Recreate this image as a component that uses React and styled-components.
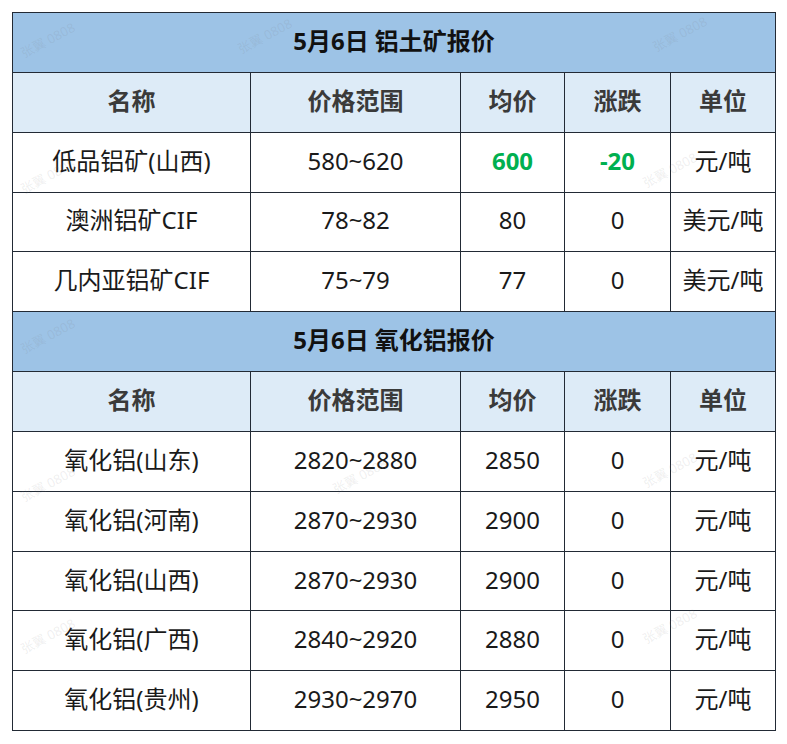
import React from "react";
import styled, { createGlobalStyle } from "styled-components";

const GlobalStyle = createGlobalStyle`
  html, body {
    margin: 0;
    padding: 0;
    background: #ffffff;
  }
  body {
    font-family: "Noto Sans", "Noto Sans CJK SC", sans-serif;
  }
`;

const sections = [
  {
    title: "5月6日 铝土矿报价",
    rows: [
      ["低品铝矿(山西)", "580~620", "600", "-20", "元/吨", true],
      ["澳洲铝矿CIF", "78~82", "80", "0", "美元/吨"],
      ["几内亚铝矿CIF", "75~79", "77", "0", "美元/吨"],
    ],
  },
  {
    title: "5月6日 氧化铝报价",
    rows: [
      ["氧化铝(山东)", "2820~2880", "2850", "0", "元/吨"],
      ["氧化铝(河南)", "2870~2930", "2900", "0", "元/吨"],
      ["氧化铝(山西)", "2870~2930", "2900", "0", "元/吨"],
      ["氧化铝(广西)", "2840~2920", "2880", "0", "元/吨"],
      ["氧化铝(贵州)", "2930~2970", "2950", "0", "元/吨"],
    ],
  },
];

const headers = ["名称", "价格范围", "均价", "涨跌", "单位"];
const colWidths = [238, 210, 104, 106, 105];

const marks = [
  [18, 30], [235, 26], [650, 24],
  [18, 166], [640, 160],
  [18, 326], [330, 466], [640, 460],
  [18, 474], [18, 626], [640, 616],
];

const App = () => {
  return (
    <>
      <GlobalStyle />
      <Page>
        <Table>
          <colgroup>
            {colWidths.map((w, i) => (
              <Col key={i} $w={w} />
            ))}
          </colgroup>
          <tbody>
            {sections.map((s) => (
              <React.Fragment key={s.title}>
                <tr>
                  <TitleCell colSpan={5}>{s.title}</TitleCell>
                </tr>
                <tr>
                  {headers.map((h) => (
                    <HeadCell key={h}>{h}</HeadCell>
                  ))}
                </tr>
                {s.rows.map((r) => (
                  <tr key={r[0]}>
                    <Cell>{r[0]}</Cell>
                    <Cell>{r[1]}</Cell>
                    <Cell $green={r[5]}>{r[2]}</Cell>
                    <Cell $green={r[5]}>{r[3]}</Cell>
                    <Cell>{r[4]}</Cell>
                  </tr>
                ))}
              </React.Fragment>
            ))}
          </tbody>
        </Table>
        {marks.map(([x, y], i) => (
          <Watermark key={i} $x={x} $y={y}>
            张翼 0808
          </Watermark>
        ))}
      </Page>
    </>
  );
};

export default App;

/* ===== STYLES ===== */

const Page = styled.div`
  position: relative;
  padding: 12px;
  width: 787px;
  box-sizing: border-box;
`;

const Table = styled.table`
  border-collapse: collapse;
  table-layout: fixed;
  width: 763px;
  border: 1px solid #222a35;
`;

const Col = styled.col`
  width: ${(p) => p.$w}px;
`;

const BaseCell = styled.td`
  border: 1px solid #222a35;
  height: 59.85px;
  padding: 0 0 3px;
  text-align: center;
  vertical-align: middle;
  box-sizing: border-box;
  font-size: 24px;
  line-height: 1;
`;

const TitleCell = styled(BaseCell)`
  background: #9dc3e6;
  color: #111;
  font-weight: 700;
`;

const HeadCell = styled(BaseCell)`
  background: #ddebf7;
  color: #3a3a3a;
  font-weight: 700;
`;

const Cell = styled(BaseCell)`
  background: #ffffff;
  color: ${(p) => (p.$green ? "#00b050" : "#1a1a1a")};
  font-weight: ${(p) => (p.$green ? 700 : 400)};
`;

const Watermark = styled.div`
  position: absolute;
  left: ${(p) => p.$x}px;
  top: ${(p) => p.$y}px;
  font-size: 13px;
  color: rgba(120, 120, 120, 0.12);
  transform: rotate(-28deg);
  pointer-events: none;
  white-space: nowrap;
`;
